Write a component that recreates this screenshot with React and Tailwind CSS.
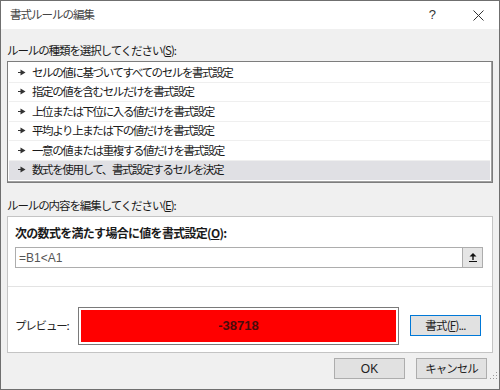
import React from "react";

const rules = [
  "セルの値に基づいてすべてのセルを書式設定",
  "指定の値を含むセルだけを書式設定",
  "上位または下位に入る値だけを書式設定",
  "平均より上または下の値だけを書式設定",
  "一意の値または重複する値だけを書式設定",
  "数式を使用して、書式設定するセルを決定",
];

const font = { fontFamily: "'Noto Sans CJK JP', 'Liberation Sans', sans-serif" };

function RowArrow() {
  return (
    <svg width="8" height="7" viewBox="0 0 8 7" className="shrink-0">
      <rect x="0" y="3" width="3" height="1" fill="#333" />
      <path d="M2.5 0.5 L7.5 3.5 L2.5 6.5 Z" fill="#333" />
    </svg>
  );
}

function UpIcon() {
  return (
    <svg width="10" height="11" viewBox="0 0 10 11">
      <path d="M5 1 L1.5 4.5 L8.5 4.5 Z" fill="#111" />
      <rect x="4.3" y="4" width="1.4" height="4" fill="#111" />
      <rect x="1" y="9" width="8" height="1" fill="#111" />
    </svg>
  );
}

export default function App() {
  return (
    <div
      className="w-[500px] h-[390px] border border-[#6f6f6f] bg-[#f0f0f0] flex flex-col text-[#1a1a1a] overflow-hidden"
      style={font}
    >
      {/* title bar */}
      <div className="h-[28px] bg-white flex items-center shrink-0">
        <span className="pl-[9px] text-[11.5px] tracking-[-1px] text-[#444]">書式ルールの編集</span>
        <span className="ml-auto text-[13px] text-[#333] mr-[37px]" style={{ fontFamily: "'Liberation Sans', sans-serif" }}>?</span>
        <svg width="11" height="11" viewBox="0 0 11 11" className="mr-[15px]">
          <path d="M0.5 0.5 L10.5 10.5 M10.5 0.5 L0.5 10.5" stroke="#333" strokeWidth="1" />
        </svg>
      </div>

      <div className="flex flex-col px-[6px] flex-1">
        <div className="pt-[13px] h-[29px] leading-[16px] text-[11.5px] tracking-[-1.1px]">
          ルールの種類を選択してください(<span className="underline">S</span>):
        </div>

        {/* rule type list */}
        <div className="mt-[3px] h-[122px] border border-[#7d7d7d] bg-white pt-[1px] pl-[1px] pr-[2px] pb-[2px] shadow-[inset_-1px_-1px_0_#a0a0a0]">
          {rules.map((r, i) => (
            <div
              key={r}
              className={`h-[19.5px] flex items-center gap-[6px] pl-[9px] border-b ${
                i === 5 ? "bg-[#e0e0e4] border-transparent" : "border-[#efefef]"
              }`}
            >
              <RowArrow />
              <span className="text-[11.5px] tracking-[-1.4px] leading-none">{r}</span>
            </div>
          ))}
        </div>

        <div className="mt-[14px] h-[16px] leading-[16px] text-[11.5px] tracking-[-1.1px]">
          ルールの内容を編集してください(<span className="underline">E</span>):
        </div>

        {/* rule description */}
        <div className="mt-[3px] h-[137px] border border-[#c4c4c4] bg-white flex flex-col">
          <div className="h-[70px] pl-[7px] pr-[9px] border-b border-[#e3e3e3]">
            <div className="pt-[8px] h-[24px] leading-[16px] font-bold text-[12px] tracking-[-0.7px]">
              次の数式を満たす場合に値を書式設定(<span className="underline">O</span>):
            </div>
            <div className="mt-[6px] h-[21px] border border-[#adadad] flex items-center">
              <span
                className="pl-[3px] text-[12px] text-[#555] flex-1"
                style={{ fontFamily: "'Liberation Sans', sans-serif" }}
              >
                =B1&lt;A1
              </span>
              <div className="w-[20px] h-full bg-[#e5e5e5] border-l border-[#adadad] flex items-center justify-center">
                <UpIcon />
              </div>
            </div>
          </div>

          <div className="flex items-start pt-[20px] pl-[7px]">
            <div className="w-[63px] h-[38px] flex items-center text-[11.5px] tracking-[-1.2px] text-[#222]">
              プレビュー:
            </div>
            <div className="w-[321px] h-[38px] border border-[#7a7a7a] p-[2px] bg-white">
              <div
                className="w-full h-full bg-[#ff0000] flex items-center justify-center font-bold text-[13px] text-[#4a0c0c]"
                style={{ fontFamily: "'Liberation Sans', sans-serif" }}
              >
                -38718
              </div>
            </div>
            <button className="ml-[11px] mt-[8px] w-[71px] h-[21px] border border-[#0078d7] bg-[#e1e1e1] flex items-center justify-center text-[11.5px] tracking-[-0.8px] text-[#222]">
              書式(<span className="underline">F</span>)...
            </button>
          </div>
        </div>

        {/* footer buttons */}
        <div className="mt-[5px] flex justify-end gap-[11px] pr-[6px] relative">
          <button
            className="w-[71px] h-[21px] border border-[#adadad] bg-[#e1e1e1] text-[12px] text-[#222] flex items-center justify-center"
            style={{ fontFamily: "'Liberation Sans', sans-serif" }}
          >
            OK
          </button>
          <button className="w-[71px] h-[21px] border border-[#adadad] bg-[#e1e1e1] text-[11.5px] tracking-[-1px] text-[#222] flex items-center justify-center">
            キャンセル
          </button>
          <svg width="8" height="8" viewBox="0 0 8 8" className="absolute right-[-5px] top-[14px]">
            <rect x="6" y="0" width="1" height="1" fill="#999" />
            <rect x="3" y="3" width="1" height="1" fill="#999" />
            <rect x="6" y="3" width="1" height="1" fill="#999" />
            <rect x="0" y="6" width="1" height="1" fill="#999" />
            <rect x="3" y="6" width="1" height="1" fill="#999" />
            <rect x="6" y="6" width="1" height="1" fill="#999" />
          </svg>
        </div>
      </div>
    </div>
  );
}
